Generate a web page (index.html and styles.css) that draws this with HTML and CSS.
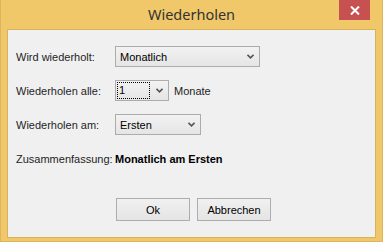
FILE: index.html
```html
<!DOCTYPE html>
<html lang="de">
<head>
    <meta charset="UTF-8">
    <title>Wiederholen</title>
    <link rel="stylesheet" href="styles.css">
</head>
<body>
    <div class="window">
        <div class="titlebar">
            <span class="title">Wiederholen</span>
            <button class="close" type="button" aria-label="Schließen">
                <svg width="10" height="9" viewBox="0 0 10 9">
                    <path d="M1 0.5 L9 8.5 M9 0.5 L1 8.5" stroke="#fff" stroke-width="2" fill="none"/>
                </svg>
            </button>
        </div>
        <div class="client">
            <div class="rows">
                <label class="lbl">Wird wiederholt:</label>
                <div class="ctl">
                    <div class="combo combo-wide">
                        <span class="value">Monatlich</span>
                        <svg class="chev" width="7" height="5" viewBox="0 0 7 5"><path d="M0.5 0.8 L3.5 3.8 L6.5 0.8" stroke="#555" stroke-width="1.6" fill="none"/></svg>
                    </div>
                </div>

                <label class="lbl">Wiederholen alle:</label>
                <div class="ctl">
                    <div class="combo combo-small">
                        <span class="value focus">1</span>
                        <svg class="chev" width="7" height="5" viewBox="0 0 7 5"><path d="M0.5 0.8 L3.5 3.8 L6.5 0.8" stroke="#555" stroke-width="1.6" fill="none"/></svg>
                    </div>
                    <span class="unit">Monate</span>
                </div>

                <label class="lbl">Wiederholen am:</label>
                <div class="ctl">
                    <div class="combo combo-mid">
                        <span class="value">Ersten</span>
                        <svg class="chev" width="7" height="5" viewBox="0 0 7 5"><path d="M0.5 0.8 L3.5 3.8 L6.5 0.8" stroke="#555" stroke-width="1.6" fill="none"/></svg>
                    </div>
                </div>

                <span class="lbl">Zusammenfassung:</span>
                <div class="ctl">
                    <strong class="summary">Monatlich am Ersten</strong>
                </div>
            </div>
            <div class="buttons">
                <button class="btn" type="button">Ok</button>
                <button class="btn" type="button">Abbrechen</button>
            </div>
        </div>
    </div>
</body>
</html>
```

FILE: styles.css
```css
body {
    margin: 0;
    padding: 0;
    font-family: 'Liberation Sans', Arial, sans-serif;
    font-size: 11px;
    color: #1a1a1a;
}

.window {
    width: 383px;
    height: 242px;
    box-sizing: border-box;
    background-color: #f0c869;
    border: 1px solid #dcb65e;
    border-top: none;
    display: flex;
    flex-direction: column;
    padding: 0 6px 3px 6px;
}

.titlebar {
    position: relative;
    height: 29px;
    flex: none;
    display: flex;
    justify-content: center;
}

.title {
    font-family: 'Noto Sans', 'Open Sans', sans-serif;
    font-size: 14.5px;
    color: #333;
    line-height: 29px;
}

.close {
    position: absolute;
    top: 0;
    right: 6px;
    width: 31px;
    height: 20px;
    border: none;
    padding: 0;
    background-color: #c75050;
    display: flex;
    align-items: center;
    justify-content: center;
}

.client {
    flex: 1;
    background-color: #f0f0f0;
    border: 1px solid #d8b25c;
    padding: 16px 0 0 8px;
}

.rows {
    display: grid;
    grid-template-columns: 99px auto;
    grid-auto-rows: 21px;
    row-gap: 13px;
    align-items: center;
}

.lbl {
    color: #1e1e1e;
}

.ctl {
    display: flex;
    align-items: center;
    gap: 5px;
}

.combo {
    box-sizing: border-box;
    height: 21px;
    border: 1px solid #acacac;
    background: linear-gradient(#f2f2f2, #e5e5e5);
    display: flex;
    align-items: center;
    justify-content: space-between;
    padding: 0 5px 0 1px;
}

.combo-wide {
    width: 145px;
}

.combo-small {
    width: 54px;
}

.combo-mid {
    width: 86px;
}

.value {
    padding-left: 3px;
    color: #000;
}

.value.focus {
    box-sizing: border-box;
    width: 33px;
    height: 17px;
    line-height: 15px;
    padding-left: 1px;
    border: 1px dotted #000;
}

.chev {
    display: block;
}

.unit {
    color: #1e1e1e;
}

.summary {
    font-weight: bold;
    color: #000;
}

.buttons {
    display: flex;
    gap: 7px;
    margin: 29px 0 0 100px;
}

.btn {
    width: 74px;
    height: 23px;
    border: 1px solid #adadad;
    background: linear-gradient(#f0f0f0, #e5e5e5);
    font-family: 'Liberation Sans', Arial, sans-serif;
    font-size: 11px;
    color: #000;
    padding: 0;
}
```
